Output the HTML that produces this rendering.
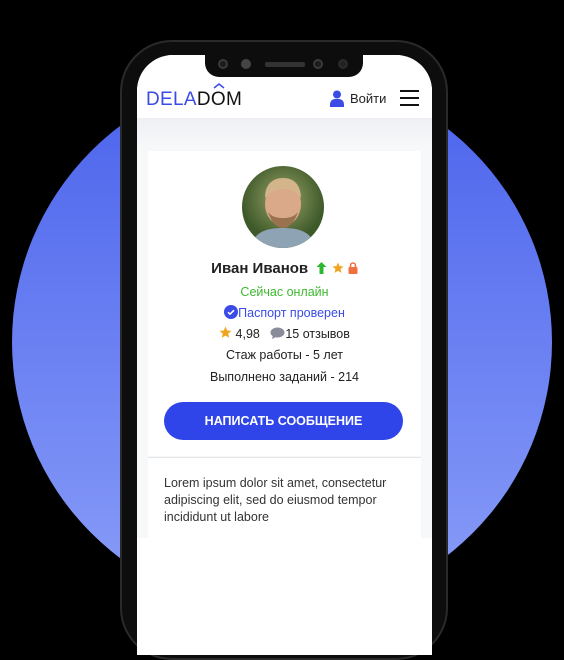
<!DOCTYPE html>
<html><head><meta charset="utf-8"><style>
*{margin:0;padding:0;box-sizing:border-box}
body{width:564px;height:605px;background:#000;position:relative;overflow:hidden;font-family:"Liberation Sans",sans-serif}
.circ{position:absolute;left:12px;top:72px;width:540px;height:540px;border-radius:50%;background:linear-gradient(#4a62ec,#8a9ef8)}
.phone{position:absolute;left:120px;top:40px;width:328px;height:620px;background:#0d0d0d;border-radius:52px;border:2px solid #2a2a2a}
.screen{position:absolute;left:137px;top:55px;width:295px;height:600px;background:#fff;border-radius:36px 36px 0 0;overflow:hidden}
.notch{position:absolute;left:68px;top:0;width:158px;height:22px;background:#0d0d0d;border-radius:0 0 14px 14px}
.dot{position:absolute;top:4px;width:10px;height:10px;border-radius:50%;background:#1c1c1c;border:2px solid #3a3a3a}
.hdr{position:absolute;left:0;top:0;width:295px;height:63px;background:#fff}
.gray{position:absolute;left:0;top:63px;width:295px;height:420px;background:linear-gradient(#eef0f3,#f7f8fa 30px)}
.card{position:absolute;left:11px;top:96px;width:273px;height:305px;background:#fff}
.card2{position:absolute;left:11px;top:402px;width:273px;height:90px;background:#fff;border-top:1px solid #e4e5e8}
.c{position:absolute;left:0;width:295px;text-align:center;font-size:12.5px;color:#222}
</style></head><body>
<div class="circ"></div>
<div class="phone"></div>
<div class="screen">
 <div class="gray"></div>
 <div class="hdr"></div>
 <div class="notch">
  <div class="dot" style="left:13px"></div><div class="dot" style="left:36px;background:#444;border-color:#444"></div>
  <div style="position:absolute;left:60px;top:7px;width:40px;height:5px;border-radius:2px;background:#333"></div>
  <div class="dot" style="left:108px"></div><div class="dot" style="left:133px;background:#222;border-color:#2a2a2a"></div>
 </div>
 <div style="position:absolute;left:9px;top:34px;font-size:19px;letter-spacing:0.3px;color:#111"><span style="color:#3a4be6">DELA</span>D<span style="position:relative">O<svg style="position:absolute;left:2px;top:-6px" width="12" height="6" viewBox="0 0 12 6"><path d="M1 5L6 1L11 5" fill="none" stroke="#3a4be6" stroke-width="1.5"/></svg></span>M</div>
 <svg style="position:absolute;left:193px;top:35px" width="14" height="17" viewBox="0 0 14 17"><circle cx="7" cy="4.5" r="4" fill="#3a4be6"/><path d="M0 17v-3a5 5 0 0 1 5-5h4a5 5 0 0 1 5 5v3z" fill="#3a4be6"/></svg>
 <div style="position:absolute;left:213px;top:36px;font-size:13px;color:#222">Войти</div>
 <div style="position:absolute;left:263px;top:35px;width:19px;height:2px;background:#111;box-shadow:0 7px 0 #111,0 14px 0 #111"></div>
 <div class="card"></div>
 <div class="card2"></div>
 <svg style="position:absolute;left:105px;top:111px" width="82" height="82" viewBox="0 0 82 82"><defs><clipPath id="cp"><circle cx="41" cy="41" r="41"/></clipPath><radialGradient id="bg" cx="0.5" cy="0.4"><stop offset="0" stop-color="#9aa46a"/><stop offset="1" stop-color="#3f5a2a"/></radialGradient></defs><g clip-path="url(#cp)"><rect width="82" height="82" fill="url(#bg)"/><path d="M8 82c4-16 16-20 33-20s29 4 33 20z" fill="#8ea3b3"/><ellipse cx="41" cy="38" rx="18" ry="22" fill="#d9a98a"/><path d="M23 32c0-14 8-20 18-20s18 6 18 20c-4-6-10-9-18-9s-14 3-18 9z" fill="#d4b48a"/><path d="M26 46c4 12 10 16 15 16s11-4 15-16c-4 5-9 6-15 6s-11-1-15-6z" fill="#9a7250"/></g></svg>
 <div class="c" style="top:205px;font-size:15px;font-weight:bold;color:#222">Иван Иванов&nbsp;
  <svg width="11" height="12" viewBox="0 0 11 12" style="vertical-align:-1px"><path d="M5.5 0L10.5 5H7.5V12H3.5V5H0.5z" fill="#2eb82e"/></svg>
  <svg width="12" height="12" viewBox="0 0 24 24" style="vertical-align:-1px"><path d="M12 1l3.2 7.2 7.8.7-5.9 5.2 1.8 7.7L12 17.8 5.1 21.8l1.8-7.7L1 8.9l7.8-.7z" fill="#f0a520"/></svg>
  <svg width="10" height="12" viewBox="0 0 10 12" style="vertical-align:-1px"><path d="M2.5 5V3.5a2.5 2.5 0 0 1 5 0V5" fill="none" stroke="#f07040" stroke-width="1.6"/><rect x="0.5" y="5" width="9" height="7" rx="1" fill="#f07040"/></svg></div>
 <div class="c" style="top:230px;color:#3cba2d">Сейчас онлайн</div>
 <div class="c" style="top:250px;color:#3a4be6"><svg width="14" height="14" viewBox="0 0 14 14" style="vertical-align:-2px"><circle cx="7" cy="7" r="7" fill="#3a4be6"/><path d="M4 7.2l2 2 4-4" fill="none" stroke="#fff" stroke-width="1.5"/></svg>Паспорт проверен</div>
 <div class="c" style="top:271px"><svg width="13" height="13" viewBox="0 0 24 24" style="vertical-align:-1px"><path d="M12 1l3.2 7.2 7.8.7-5.9 5.2 1.8 7.7L12 17.8 5.1 21.8l1.8-7.7L1 8.9l7.8-.7z" fill="#f0a520"/></svg> 4,98 &nbsp;&nbsp;<svg width="15" height="12" viewBox="0 0 15 12" style="vertical-align:-1px"><ellipse cx="7.5" cy="5.5" rx="7" ry="5" fill="#8a8d99"/><path d="M3 8l-1 4 4-2z" fill="#8a8d99"/></svg>15 отзывов</div>
 <div class="c" style="top:293px">Стаж работы - 5 лет</div>
 <div class="c" style="top:315px">Выполнено заданий - 214</div>
 <div style="position:absolute;left:27px;top:347px;width:239px;height:38px;border-radius:19px;background:#2f45ea;color:#fff;font-weight:bold;font-size:12.5px;text-align:center;line-height:38px">НАПИСАТЬ СООБЩЕНИЕ</div>
 <div style="position:absolute;left:27px;top:420px;width:240px;font-size:12.5px;line-height:17px;color:#333">Lorem ipsum dolor sit amet, consectetur adipiscing elit, sed do eiusmod tempor incididunt ut labore</div>
</div>
</body></html>
